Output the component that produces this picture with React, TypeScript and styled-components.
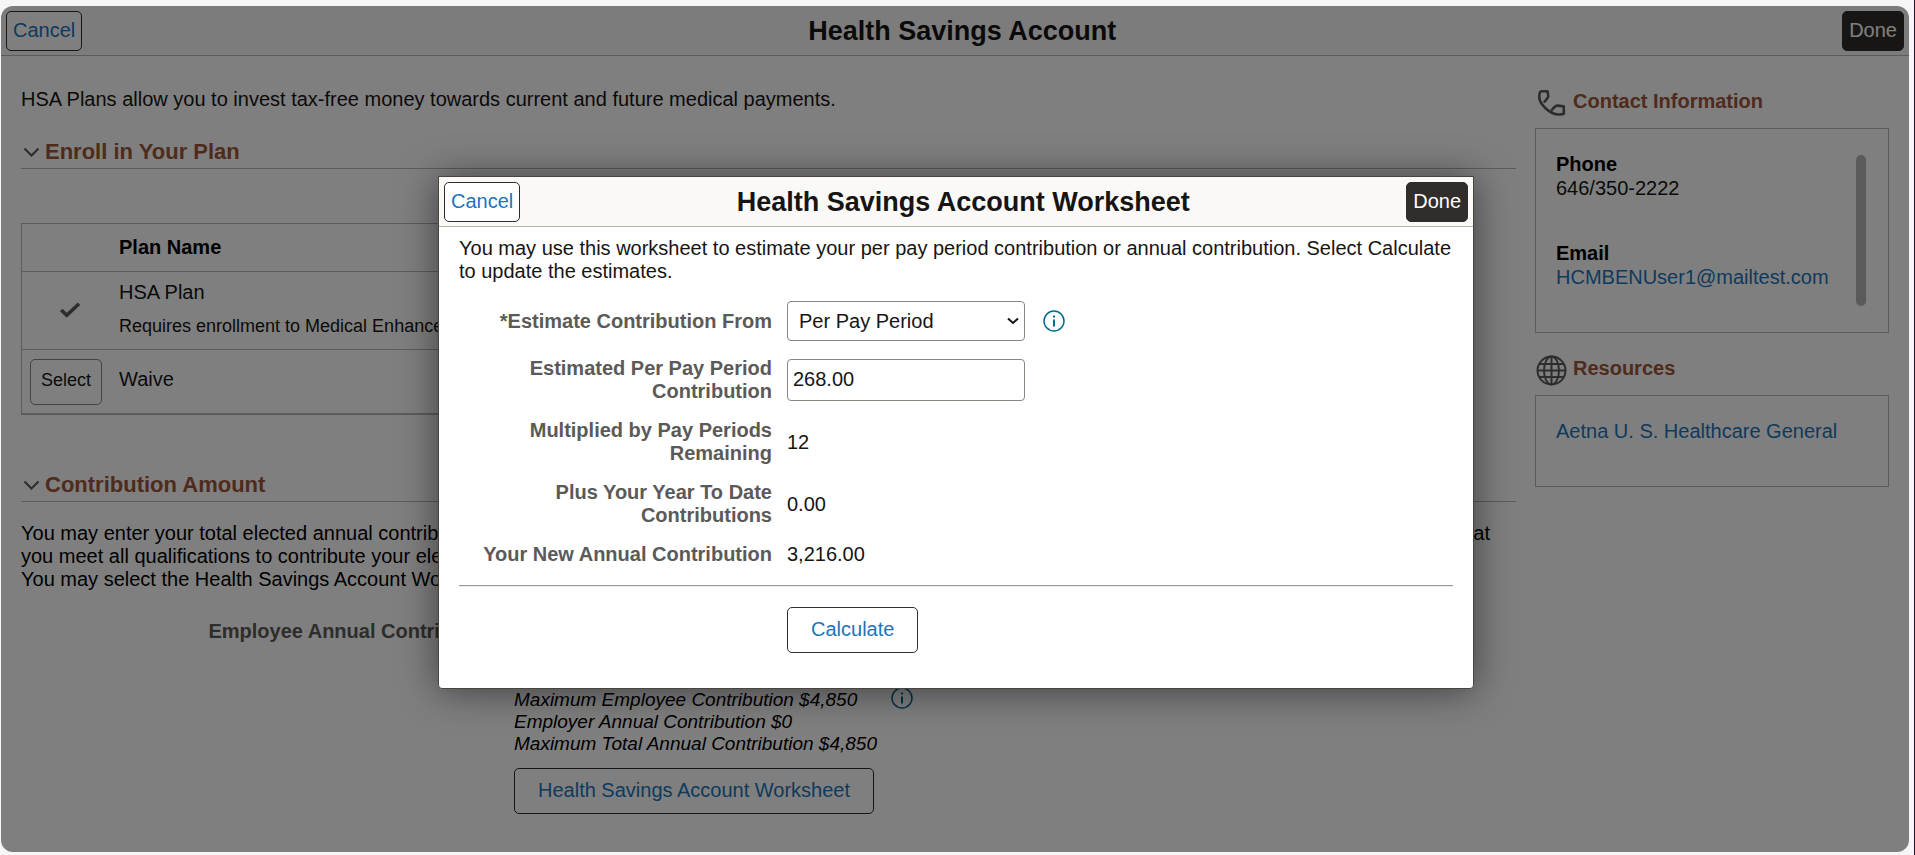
import React, { useState } from 'react';
import styled, { createGlobalStyle } from 'styled-components';

const GlobalStyle = createGlobalStyle`
  *, *::before, *::after { box-sizing: border-box; }
  body {
    margin: 0;
    background: #f6f6f6;
    border-right: 1px solid #2b0b30;
    color: #161513;
    font-family: 'Liberation Sans', Arial, sans-serif;
    font-size: 20px;
    line-height: 23px;
  }
  button, input, select { font: inherit; color: inherit; }
  h1, h2, p, dl, dd { margin: 0; }
`;

const Shell = styled.div`
  padding: 6px 5px 3px 1px;
`;

const Frame = styled.div`
  position: relative;
  min-height: calc(100vh - 9px);
  border-radius: 12px;
  background: #fff;
  overflow: hidden;
`;

const TitleBar = styled.header`
  display: flex;
  align-items: flex-start;
  justify-content: space-between;
  height: 50px;
  padding: 5px;
  background: #fbf9f8;
  border-bottom: 1px solid #bcb6b1;
`;

const Title = styled.h1`
  padding-top: 5px;
  font-size: 27px;
  line-height: 31px;
  font-weight: bold;
`;

const Button = styled.button<{ $primary?: boolean; $size?: 'bar' | 'row' | 'page' }>`
  height: ${p => (p.$size === 'bar' ? '40px' : '46px')};
  padding: ${p => (p.$size === 'bar' ? '0 6px 2px' : p.$size === 'row' ? '0 10px 3px' : '0 23px 1px')};
  border: 1px solid ${p => (p.$size === 'row' ? '#8b8580' : '#312d2a')};
  border-radius: 5px;
  background: ${p => (p.$primary ? '#312d2a' : '#fff')};
  color: ${p => (p.$primary ? '#fff' : p.$size === 'row' ? '#161513' : '#1b75bb')};
  font-size: ${p => (p.$size === 'row' ? '18px' : '20px')};
  cursor: pointer;
`;

const Columns = styled.div`
  display: grid;
  grid-template-columns: minmax(0, 1fr) 354px;
  gap: 19px;
  padding: 32px 20px 0 20px;
`;

const SectionHead = styled.h2<{ $gap: number }>`
  display: flex;
  align-items: center;
  gap: 5px;
  margin-top: ${p => p.$gap}px;
  padding: 0 0 2px 3px;
  height: 32px;
  border-bottom: 1px solid #bcb6b1;
  color: #9e5739;
  font-size: 22px;
  line-height: 26px;

  svg { margin-top: 2px; }
`;

const PlanTable = styled.table`
  width: 1400px;
  max-width: 90%;
  margin-top: 54px;
  border-collapse: separate;
  border-spacing: 0;
  border: 1px solid #bcb6b1;
  border-bottom: 2px solid #bcb6b1;
  text-align: left;

  th, td { padding: 0; border-bottom: 1px solid #bcb6b1; }
  th { height: 48px; color: #000; }
  tbody tr:last-child td { border-bottom: 0; }
`;

const PlanRow = styled.tr<{ $height: number }>`
  height: ${p => p.$height}px;
`;

const MarkCell = styled.td`
  width: 97px;
  text-align: left;

  svg { display: block; margin: 0 0 2px 37px; }
  button { display: block; margin-left: 8px; }
`;

const PlanCell = styled.td`
  && { padding-bottom: 4px; }
`;

const Requirement = styled.p`
  margin-top: 12px;
  font-size: 18px;
  line-height: 20px;
`;

const Notes = styled.p`
  margin-top: 20px;
  color: #000;
`;

const Election = styled.div`
  display: grid;
  grid-template-columns: 480px auto;
  column-gap: 13px;
  justify-content: start;
  padding-top: 29px;
`;

const Label = styled.label`
  color: #5b5a58;
  font-weight: bold;
  text-align: right;
`;

const ElectionInput = styled.input`
  width: 238px;
  height: 42px;
  margin-bottom: 25px;
  border: 1px solid #8b8580;
  border-radius: 4px;
`;

const Limits = styled.div`
  display: flex;
  grid-column: 2;
  align-items: flex-start;
  gap: 14px;
  color: #000;
  font-size: 19px;
  line-height: 22px;
  font-style: italic;

  > div { padding-top: 2px; }
`;

const Start = styled.div`
  grid-column: 2;
  padding-top: 13px;
`;

const SideHead = styled.h2<{ $gap: number }>`
  display: flex;
  align-items: center;
  gap: 5px;
  height: 32px;
  margin-top: ${p => p.$gap}px;
  color: #9e5739;
  font-size: 20px;
  line-height: 23px;

  span { padding-bottom: 3px; }
`;

const Card = styled.div<{ $height: number }>`
  display: flex;
  justify-content: space-between;
  min-height: ${p => p.$height}px;
  margin-top: 9px;
  padding: 24px 22px 24px 20px;
  border: 1px solid #bcb6b1;
`;

const Contacts = styled.dl`
  dt { color: #000; font-weight: bold; }
  dd { margin-top: 1px; }
  dd + dt { margin-top: 42px; }
`;

const Link = styled.a`
  color: #1b75bb;
  text-decoration: none;
`;

const ScrollThumb = styled.div`
  width: 10px;
  height: 151px;
  margin-top: 2px;
  border-radius: 5px;
  background: #b4b4b4;
`;

const Overlay = styled.div`
  position: absolute;
  inset: 0;
  display: flex;
  align-items: center;
  justify-content: center;
  padding: 7px 0 0 2px;
  background: rgba(0, 0, 0, 0.5);
`;

const Dialog = styled.section`
  width: 1036px;
  max-width: 100%;
  border: 1px solid #4a443e;
  border-radius: 0 0 4px 4px;
  background: #fff;
  box-shadow: 0 2px 38px rgba(0, 0, 0, 0.5);
`;

const DialogBody = styled.div`
  padding: 10px 20px 35px;
`;

const Fields = styled.div`
  display: grid;
  grid-template-columns: 313px 1fr;
  gap: 16px 15px;
  align-items: center;
  margin-top: 18px;
  padding-bottom: 19px;
  border-bottom: 1px solid #9a9a9a;
  box-shadow: 0 1px 0 #eee;
`;

const Control = styled.div`
  display: flex;
  align-items: center;
  gap: 18px;
  min-height: 23px;
`;

const SelectWrap = styled.div`
  display: grid;
  align-items: center;
  width: 238px;

  > * { grid-area: 1 / 1; }
  svg { justify-self: end; margin-right: 6px; pointer-events: none; }
`;

const Select = styled.select`
  width: 100%;
  height: 40px;
  padding: 0 24px 0 11px;
  border: 1px solid #8b8580;
  border-radius: 4px;
  background: #fff;
  appearance: none;
`;

const AmountInput = styled.input`
  width: 238px;
  height: 42px;
  padding: 0 5px 1px;
  border: 1px solid #8b8580;
  border-radius: 4px;
  background: #fff;
`;

const InfoButton = styled.button`
  display: block;
  padding: 0;
  border: 0;
  background: none;
  cursor: pointer;

  svg { display: block; }
`;

const Actions = styled.div`
  padding: 21px 0 0 328px;
`;

const Chevron = () => (
  <svg width="16" height="11" viewBox="0 0 16 11" fill="none" stroke="#5b5a58" strokeWidth="2">
    <path d="M.5 1.500l7 7 7-7" />
  </svg>
);

const Check = () => (
  <svg width="22" height="16" viewBox="0 0 22 16" fill="none" stroke="#5b5a58" strokeWidth="3.600">
    <path d="M2.200 8l5.600 5.200L20 1.800" />
  </svg>
);

const PhoneIcon = () => (
  <svg width="33" height="32" viewBox="0 0 33 32" fill="none" stroke="#5b5a58" strokeWidth="2.600" strokeLinejoin="round">
    <path d="M5.500 4.200h7l.8 4.800c.2 1.700-1.700 3.300-4.500 6.400M5.500 4.200C2.500 10 5.500 16.500 10.800 21.500c5 4.800 11.200 7.400 18 5.200v-7.300l-6.400-.8c-2.200-.2-3.700 2.100-6.200 5.200" />
  </svg>
);

const GlobeIcon = () => (
  <svg width="33" height="32" viewBox="0 0 33 32" fill="none" stroke="#5b5a58" strokeWidth="2">
    <circle cx="16.500" cy="16.500" r="14" />
    <ellipse cx="16.500" cy="16.500" rx="7.500" ry="14" />
    <path d="M16.500 2.500v28M2.500 16.500h28M4.500 10h24M4.500 23h24" />
  </svg>
);

const InfoIcon = () => (
  <svg width="22" height="22" viewBox="0 0 22 22" fill="none" stroke="#006b8f" strokeWidth="1.500">
    <circle cx="11" cy="11" r="10" />
    <path d="M11 9.500v7M11 5.500v2" strokeWidth="2" />
  </svg>
);

const SelectArrow = () => (
  <svg width="12" height="8" viewBox="0 0 12 8" fill="none" stroke="#161513" strokeWidth="2">
    <path d="M1 1.500l5 4.500 5-4.500" />
  </svg>
);

const totals = [
  { label: 'Multiplied by Pay Periods Remaining', value: '12' },
  { label: 'Plus Your Year To Date Contributions', value: '0.00' },
  { label: 'Your New Annual Contribution', value: '3,216.00' },
];

export default function App() {
  const [basis, setBasis] = useState('period');
  const [amount, setAmount] = useState('268.00');

  return (
    <Shell>
      <GlobalStyle />
      <Frame>
        <TitleBar>
          <Button $size="bar">Cancel</Button>
          <Title>Health Savings Account</Title>
          <Button $size="bar" $primary>Done</Button>
        </TitleBar>

        <Columns>
          <main>
            <p>HSA Plans allow you to invest tax-free money towards current and future medical payments.</p>

            <SectionHead $gap={26}><Chevron />Enroll in Your Plan</SectionHead>
            <PlanTable>
              <thead>
                <tr><th aria-label="Selection" /><th>Plan Name</th></tr>
              </thead>
              <tbody>
                <PlanRow $height={78}>
                  <MarkCell><Check /></MarkCell>
                  <PlanCell>
                    HSA Plan
                    <Requirement>Requires enrollment to Medical Enhanced Plan</Requirement>
                  </PlanCell>
                </PlanRow>
                <PlanRow $height={63}>
                  <MarkCell><Button $size="row">Select</Button></MarkCell>
                  <PlanCell>Waive</PlanCell>
                </PlanRow>
              </tbody>
            </PlanTable>

            <SectionHead $gap={55}><Chevron />Contribution Amount</SectionHead>
            <Notes>
              You may enter your total elected annual contribution or use the worksheet to help estimate the amount. By entering an amount you are confirming to the employer that
              you meet all qualifications to contribute your elected amount.
              <br />
              You may select the Health Savings Account Worksheet to calculate your contribution.
            </Notes>
            <Election>
              <Label htmlFor="annual">Employee Annual Contribution</Label>
              <ElectionInput id="annual" />
              <Limits>
                <div>
                  <p>Maximum Employee Contribution $4,850</p>
                  <p>Employer Annual Contribution $0</p>
                  <p>Maximum Total Annual Contribution $4,850</p>
                </div>
                <InfoButton aria-label="Contribution limits"><InfoIcon /></InfoButton>
              </Limits>
              <Start><Button $size="page">Health Savings Account Worksheet</Button></Start>
            </Election>
          </main>

          <aside>
            <SideHead $gap={-1}><PhoneIcon /><span>Contact Information</span></SideHead>
            <Card $height={205}>
              <Contacts>
                <dt>Phone</dt>
                <dd>646/350-2222</dd>
                <dt>Email</dt>
                <dd><Link href="mailto:HCMBENUser1@mailtest.com">HCMBENUser1@mailtest.com</Link></dd>
              </Contacts>
              <ScrollThumb />
            </Card>
            <SideHead $gap={21}><GlobeIcon /><span>Resources</span></SideHead>
            <Card $height={92}>
              <Link href="#aetna">Aetna U. S. Healthcare General</Link>
            </Card>
          </aside>
        </Columns>

        <Overlay>
          <Dialog role="dialog" aria-modal="true" aria-labelledby="worksheet-title">
            <TitleBar>
              <Button $size="bar">Cancel</Button>
              <Title id="worksheet-title">Health Savings Account Worksheet</Title>
              <Button $size="bar" $primary>Done</Button>
            </TitleBar>
            <DialogBody>
              <p>
                You may use this worksheet to estimate your per pay period contribution or annual contribution. Select
                Calculate to update the estimates.
              </p>
              <Fields>
                <Label htmlFor="basis">*Estimate Contribution From</Label>
                <Control>
                  <SelectWrap>
                    <Select id="basis" value={basis} onChange={e => setBasis(e.target.value)}>
                      <option value="period">Per Pay Period</option>
                      <option value="annual">Annual Amount</option>
                    </Select>
                    <SelectArrow />
                  </SelectWrap>
                  <InfoButton aria-label="About the estimate"><InfoIcon /></InfoButton>
                </Control>
                <Label htmlFor="amount">Estimated Per Pay Period Contribution</Label>
                <Control>
                  <AmountInput id="amount" value={amount} onChange={e => setAmount(e.target.value)} />
                </Control>
                {totals.map(t => (
                  <React.Fragment key={t.label}>
                    <Label as="span">{t.label}</Label>
                    <Control>{t.value}</Control>
                  </React.Fragment>
                ))}
              </Fields>
              <Actions>
                <Button $size="page">Calculate</Button>
              </Actions>
            </DialogBody>
          </Dialog>
        </Overlay>
      </Frame>
    </Shell>
  );
}
